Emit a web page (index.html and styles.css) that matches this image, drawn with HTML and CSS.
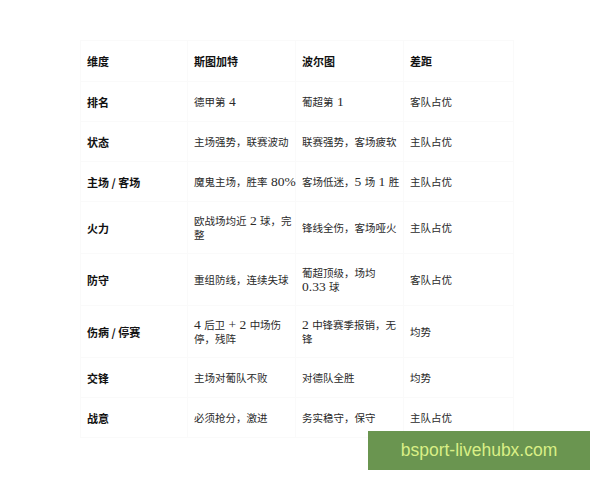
FILE: index.html
```html
<!DOCTYPE html>
<html lang="zh">
<head>
<meta charset="utf-8">
<link rel="stylesheet" href="styles.css">
</head>
<body>
<div class="page">
  <table class="cmp">
    <colgroup>
      <col class="c1"><col class="c2"><col class="c3"><col class="c4">
    </colgroup>
    <thead>
      <tr><th>维度</th><th>斯图加特</th><th>波尔图</th><th>差距</th></tr>
    </thead>
    <tbody>
      <tr><th>排名</th><td>德甲第<span class="num"> 4</span></td><td>葡超第<span class="num"> 1</span></td><td>客队占优</td></tr>
      <tr><th>状态</th><td>主场强势，联赛波动</td><td>联赛强势，客场疲软</td><td>主队占优</td></tr>
      <tr><th>主场 / 客场</th><td>魔鬼主场，胜率<span class="num"> 80%</span></td><td>客场低迷，<span class="num">5 </span>场<span class="num"> 1 </span>胜</td><td>主队占优</td></tr>
      <tr class="tall"><th>火力</th><td>欧战场均近<span class="num"> 2 </span>球，完<br>整</td><td>锋线全伤，客场哑火</td><td>主队占优</td></tr>
      <tr class="tall"><th>防守</th><td>重组防线，连续失球</td><td>葡超顶级，场均<br><span class="num">0.33 </span>球</td><td>客队占优</td></tr>
      <tr class="tall"><th>伤病 / 停赛</th><td><span class="num">4 </span>后卫<span class="num"> + 2 </span>中场伤<br>停，残阵</td><td><span class="num">2 </span>中锋赛季报销，无<br>锋</td><td>均势</td></tr>
      <tr><th>交锋</th><td>主场对葡队不败</td><td>对德队全胜</td><td>均势</td></tr>
      <tr><th>战意</th><td>必须抢分，激进</td><td>务实稳守，保守</td><td>主队占优</td></tr>
    </tbody>
  </table>
  <div class="watermark">bsport-livehubx.com</div>
</div>
</body>
</html>
```
FILE: styles.css
```css
html, body {
  margin: 0;
  padding: 0;
  background: #ffffff;
}
.page {
  position: relative;
  width: 600px;
  height: 480px;
  padding: 40px 0 0 80px;
  box-sizing: border-box;
}
.cmp {
  border-collapse: collapse;
  table-layout: fixed;
  width: 433px;
  font-family: "Noto Sans CJK SC", sans-serif;
  font-size: 10.5px;
  line-height: 14px;
  color: #2a2a2a;
}
.c1 { width: 107px; }
.c2 { width: 108px; }
.c3 { width: 108px; }
.c4 { width: 110px; }
.cmp th, .cmp td {
  border: 1px solid #fafafa;
  padding: 0 2px 0 6px;
  height: 39px;
  text-align: left;
  vertical-align: middle;
  white-space: nowrap;
}
.cmp tr.tall th, .cmp tr.tall td {
  height: 51px;
}
.cmp th {
  font-weight: bold;
  font-size: 11px;
  color: #111111;
}
.cmp thead th {
  height: 40px;
}
.num {
  font-family: "Liberation Serif", serif;
  font-size: 13.5px;
  line-height: 13px;
}
.watermark {
  position: absolute;
  left: 368px;
  top: 431px;
  width: 222px;
  height: 39px;
  background: #6a9550;
  color: #d9ef86;
  font-family: "Liberation Sans", sans-serif;
  font-size: 17.5px;
  line-height: 39px;
  text-align: center;
}
```
